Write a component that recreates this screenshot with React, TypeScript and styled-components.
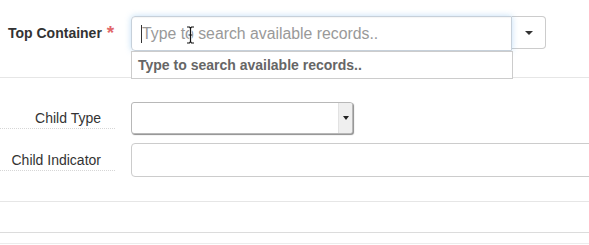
import React from "react";
import styled, { createGlobalStyle } from "styled-components";

const GlobalStyle = createGlobalStyle`
  html, body { margin: 0; padding: 0; background: #fff; overflow: hidden; }
  body { font-family: "Liberation Sans", Arial, sans-serif; color: #333; }
  * { box-sizing: border-box; }
`;

const Form = styled.div`
  width: 589px;
  display: flex;
  flex-direction: column;
`;

const TopRow = styled.div`
  display: flex;
  align-items: flex-start;
  padding-top: 16px;
  height: 78px;
  border-bottom: 1px solid #e6e6e6;
`;

const TopLabel = styled.label`
  flex: none;
  width: 131px;
  padding-left: 8px;
  height: 35px;
  line-height: 35px;
  font-size: 14px;
  font-weight: bold;
  color: #333;
  white-space: nowrap;
`;

const Required = styled.span`
  color: #e2676a;
  margin-left: 5px;
  font-size: 19px;
  vertical-align: top;
  line-height: 33px;
`;

const InputGroup = styled.div`
  position: relative;
  display: flex;
  align-items: flex-start;
`;

const SearchInput = styled.div`
  position: relative;
  width: 381px;
  height: 35px;
  border: 1px solid #c6d0da;
  border-radius: 4px 0 0 4px;
  box-shadow: 0 0 6px rgba(102, 175, 233, 0.4), inset 0 1px 1px rgba(0, 0, 0, 0.04);
  padding-left: 9px;
  display: flex;
  align-items: center;
  font-size: 15.8px;
  color: #999;
  white-space: nowrap;
`;

const Caret = styled.span`
  display: inline-block;
  width: 1px;
  height: 18px;
  background: #333;
`;

const DropButton = styled.div`
  width: 34px;
  height: 33px;
  border: 1px solid #ccc;
  border-left: none;
  border-radius: 0 4px 4px 0;
  display: flex;
  align-items: center;
  justify-content: center;
`;

const TriangleDown = styled.span`
  width: 0;
  height: 0;
  border-left: 4px solid transparent;
  border-right: 4px solid transparent;
  border-top: 4px solid #333;
`;

const Results = styled.div`
  position: absolute;
  top: 35px;
  left: 0;
  width: 382px;
  height: 28px;
  background: #fff;
  border: 1px solid #ccc;
  padding-left: 6px;
  font-size: 14px;
  font-weight: bold;
  color: #666;
  line-height: 27px;
  white-space: nowrap;
`;

const MouseCursor = styled.svg`
  position: absolute;
  left: 54px;
  top: 9px;
`;

const FieldRow = styled.div<{ $mt: number }>`
  display: flex;
  align-items: center;
  margin-top: ${(p) => p.$mt}px;
`;

const FieldLabel = styled.label`
  flex: none;
  width: 115px;
  margin-right: 16px;
  text-align: right;
  padding-right: 14px;
  height: 21px;
  line-height: 20px;
  font-size: 14px;
  color: #333;
  border-bottom: 1px dotted #d6d6d6;
  white-space: nowrap;
`;

const Select = styled.div`
  flex: none;
  width: 222px;
  height: 32px;
  border: 1px solid #b8b8b8;
  border-radius: 3px;
  box-shadow: 1px 1px 1px rgba(0, 0, 0, 0.45);
  display: flex;
  justify-content: flex-end;
  overflow: hidden;
  background: #fff;
`;

const SelectArrow = styled.div`
  width: 14px;
  height: 100%;
  background: #efefef;
  border-left: 1px solid #e2e2e2;
  display: flex;
  align-items: center;
  justify-content: center;
`;

const SmallTriangle = styled.span`
  width: 0;
  height: 0;
  border-left: 3.5px solid transparent;
  border-right: 3.5px solid transparent;
  border-top: 4px solid #222;
`;

const TextInput = styled.div`
  flex: none;
  width: 480px;
  height: 34px;
  border: 1px solid #ccc;
  border-radius: 4px;
`;

const Divider = styled.div<{ $mt: number; $color: string }>`
  margin-top: ${(p) => p.$mt}px;
  border-top: 1px solid ${(p) => p.$color};
  height: 0;
`;

export default function App() {
  return (
    <>
      <GlobalStyle />
      <Form>
        <TopRow>
          <TopLabel>
            Top Container<Required>*</Required>
          </TopLabel>
          <InputGroup>
            <SearchInput>
              <Caret />
              Type to search available records..
              <MouseCursor width="9" height="18" viewBox="0 0 9 18">
                <path
                  d="M1 1h2.5L4.5 2.5L5.5 1H8M4.5 2.5v13M1 17h2.5L4.5 15.5L5.5 17H8M2.5 9h4"
                  fill="none"
                  stroke="#fff"
                  strokeWidth="2.6"
                />
                <path
                  d="M1 1h2.5L4.5 2.5L5.5 1H8M4.5 2.5v13M1 17h2.5L4.5 15.5L5.5 17H8M2.5 9h4"
                  fill="none"
                  stroke="#111"
                  strokeWidth="1.2"
                />
              </MouseCursor>
            </SearchInput>
            <DropButton>
              <TriangleDown />
            </DropButton>
            <Results>Type to search available records..</Results>
          </InputGroup>
        </TopRow>
        <FieldRow $mt={24}>
          <FieldLabel>Child Type</FieldLabel>
          <Select>
            <SelectArrow>
              <SmallTriangle />
            </SelectArrow>
          </Select>
        </FieldRow>
        <FieldRow $mt={9}>
          <FieldLabel>Child Indicator</FieldLabel>
          <TextInput />
        </FieldRow>
        <Divider $mt={24} $color="#e6e6e6" />
        <Divider $mt={30} $color="#dcdcdc" />
        <Divider $mt={10} $color="#ececec" />
      </Form>
    </>
  );
}
